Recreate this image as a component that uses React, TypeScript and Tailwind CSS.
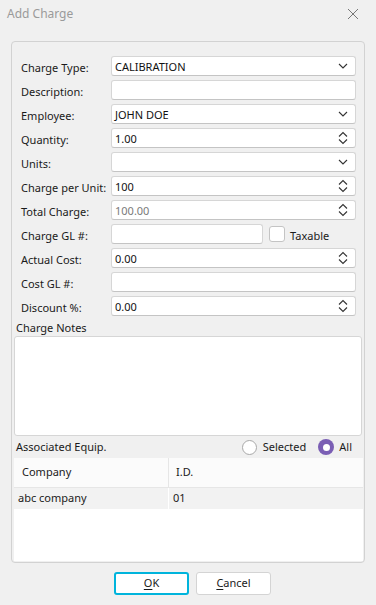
import React from "react";

const font = { fontFamily: '"Noto Sans", "Segoe UI", sans-serif' };

function ChevronDown() {
  return (
    <svg width="10" height="6" viewBox="0 0 10 6" className="shrink-0">
      <path d="M1 1 L5 5 L9 1" fill="none" stroke="#333" strokeWidth="1.1" />
    </svg>
  );
}

function Spinner() {
  return (
    <svg width="10" height="14" viewBox="0 0 10 14" className="shrink-0">
      <path d="M1 5.5 L5 1.5 L9 5.5" fill="none" stroke="#333" strokeWidth="1.1" />
      <path d="M1 8.5 L5 12.5 L9 8.5" fill="none" stroke="#333" strokeWidth="1.1" />
    </svg>
  );
}

function Field({
  value = "",
  kind,
  gray,
  w,
}: {
  value?: string;
  kind?: "select" | "spin";
  gray?: boolean;
  w?: string;
}) {
  return (
    <div
      className={`h-[20px] ${w ?? "w-[245px]"} bg-white border border-[#d6d6d6] border-b-[#c4c4c4] rounded-[3px] flex items-center pl-[3px] pr-[7px]`}
    >
      <span className={`flex-1 text-[11px] leading-none ${gray ? "text-[#7a7a7a]" : "text-[#111]"}`}>{value}</span>
      {kind === "select" && <ChevronDown />}
      {kind === "spin" && <Spinner />}
    </div>
  );
}

function Row({ label, children }: { label: string; children: React.ReactNode }) {
  return (
    <div className="flex items-center h-[20px]">
      <div className="w-[90px] text-[11px] text-[#1a1a1a] leading-none pt-[2px]">{label}</div>
      {children}
    </div>
  );
}

export default function App() {
  return (
    <div className="w-[376px] h-[605px] bg-[#f0f0f0] relative overflow-hidden" style={font}>
      {/* title bar */}
      <div className="h-[41px] flex items-start">
        <div className="pl-[7px] pt-[5px] text-[12px] text-[#9a9a9a]">Add Charge</div>
        <div className="ml-auto mr-[17px] mt-[8px]">
          <svg width="12" height="12" viewBox="0 0 12 12">
            <path d="M1 1 L11 11 M11 1 L1 11" stroke="#777" strokeWidth="1" />
          </svg>
        </div>
      </div>

      {/* panel */}
      <div className="ml-[11px] w-[354px] h-[522px] border border-[#d2d2d2] rounded-[4px] flex flex-col">
        <div className="pt-[14px] pl-[9px] flex flex-col gap-[4px]">
          <Row label="Charge Type:">
            <Field value="CALIBRATION" kind="select" />
          </Row>
          <Row label="Description:">
            <Field />
          </Row>
          <Row label="Employee:">
            <Field value="JOHN DOE" kind="select" />
          </Row>
          <Row label="Quantity:">
            <Field value="1.00" kind="spin" />
          </Row>
          <Row label="Units:">
            <Field kind="select" />
          </Row>
          <Row label="Charge per Unit:">
            <Field value="100" kind="spin" />
          </Row>
          <Row label="Total Charge:">
            <Field value="100.00" kind="spin" gray />
          </Row>
          <Row label="Charge GL #:">
            <Field w="w-[152px]" />
            <div className="ml-[6px] w-[16px] h-[16px] bg-white border border-[#c4c4c4] rounded-[3px]" />
            <span className="ml-[5px] text-[11px] text-[#1a1a1a] leading-none pt-[3px]">Taxable</span>
          </Row>
          <Row label="Actual Cost:">
            <Field value="0.00" kind="spin" />
          </Row>
          <Row label="Cost GL #:">
            <Field />
          </Row>
          <Row label="Discount %:">
            <Field value="0.00" kind="spin" />
          </Row>
        </div>

        <div className="px-[2px] flex flex-col flex-1">
          <div className="h-[20px] pl-[2px] pt-[3px] text-[11px] text-[#1a1a1a] leading-none flex items-center">
            Charge Notes
          </div>
          <div className="h-[100px] bg-white border border-[#d6d6d6] rounded-[3px]" />
          <div className="h-[22px] flex items-center">
            <span className="pl-[2px] text-[11px] text-[#1a1a1a]">Associated Equip.</span>
            <div className="ml-auto flex items-center pr-[10px]">
              <div className="w-[15px] h-[15px] rounded-full bg-white border border-[#a8a8a8]" />
              <span className="ml-[6px] text-[11px] text-[#1a1a1a]">Selected</span>
              <div className="ml-[12px] w-[16px] h-[16px] rounded-full bg-[#7a5eb4] flex items-center justify-center">
                <div className="w-[7px] h-[7px] rounded-full bg-white" />
              </div>
              <span className="ml-[5px] text-[11px] text-[#1a1a1a]">All</span>
            </div>
          </div>
          <div className="flex-1 mb-[1px] mr-[-1px] bg-white flex flex-col">
            <div className="h-[30px] flex bg-[#fbfbfb] border-b border-[#e6e6e6]">
              <div className="w-[155px] pl-[8px] flex items-center text-[11px] text-[#1a1a1a] border-r border-[#e6e6e6]">
                Company
              </div>
              <div className="flex-1 pl-[7px] flex items-center text-[11px] text-[#1a1a1a]">I.D.</div>
            </div>
            <div className="h-[21px] flex bg-[#f2f2f2]">
              <div className="w-[155px] pl-[4px] flex items-center text-[11px] text-[#1a1a1a] border-r border-white">
                abc company
              </div>
              <div className="flex-1 pl-[4px] flex items-center text-[11px] text-[#1a1a1a]">01</div>
            </div>
          </div>
        </div>
      </div>

      {/* buttons */}
      <div className="flex pl-[114px] pt-[9px] gap-[7px]">
        <button className="w-[75px] h-[23px] bg-white border-2 border-[#00b4dc] rounded-[3px] text-[11px] text-[#1a1a1a]">
          <span className="underline underline-offset-2">O</span>K
        </button>
        <button className="w-[75px] h-[23px] bg-white border border-[#d4d4d4] rounded-[3px] text-[11px] text-[#1a1a1a]">
          <span className="underline underline-offset-2">C</span>ancel
        </button>
      </div>
    </div>
  );
}
